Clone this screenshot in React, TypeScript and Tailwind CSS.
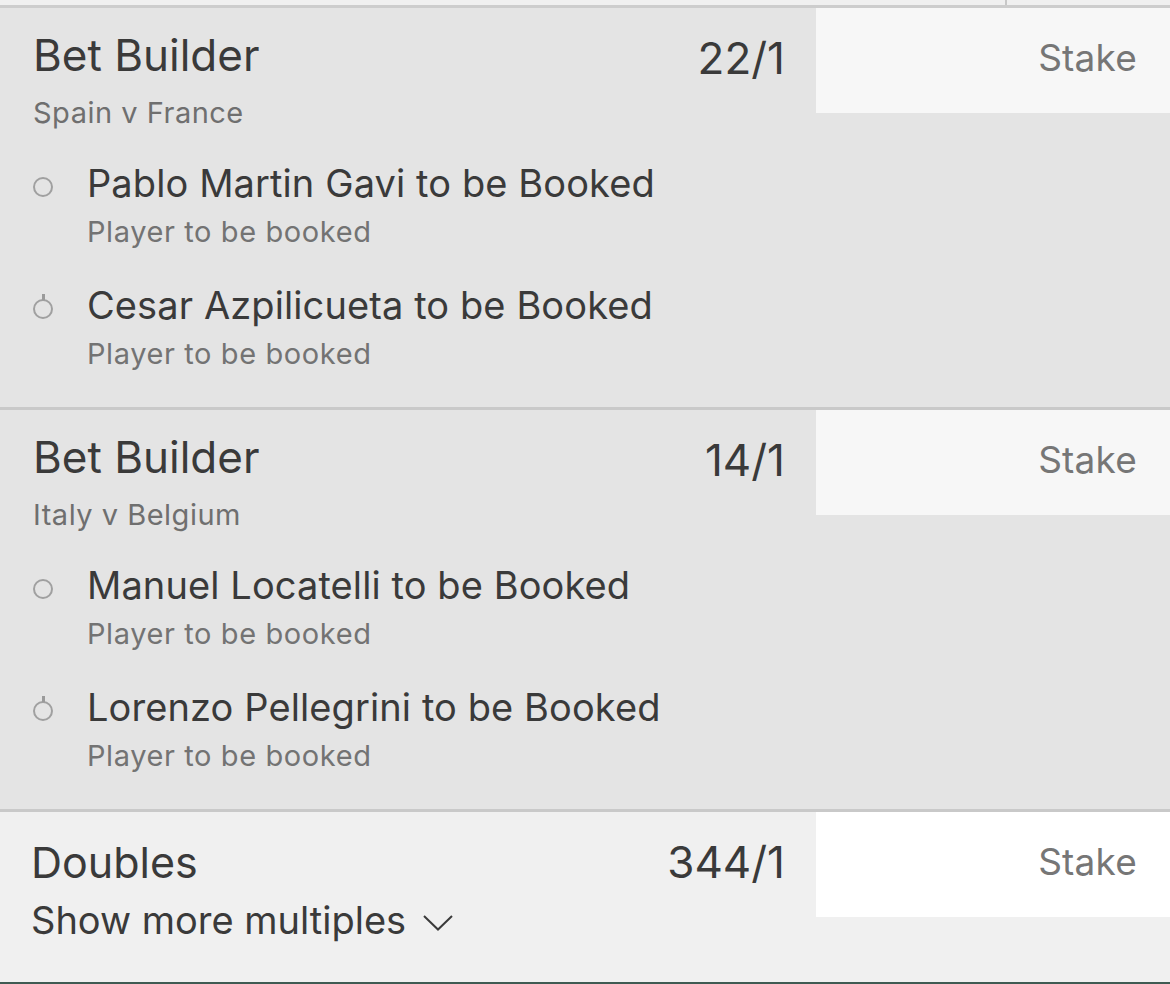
import React from "react";

type Leg = { name: string; market: string };
type Builder = { title: string; match: string; odds: string; legs: Leg[] };

const builders: Builder[] = [
  {
    title: "Bet Builder",
    match: "Spain v France",
    odds: "22/1",
    legs: [
      { name: "Pablo Martin Gavi to be Booked", market: "Player to be booked" },
      { name: "Cesar Azpilicueta to be Booked", market: "Player to be booked" },
    ],
  },
  {
    title: "Bet Builder",
    match: "Italy v Belgium",
    odds: "14/1",
    legs: [
      { name: "Manuel Locatelli to be Booked", market: "Player to be booked" },
      { name: "Lorenzo Pellegrini to be Booked", market: "Player to be booked" },
    ],
  },
];

// Ring marker for each leg; later legs get a short connector stub on top
function LegDot({ linked }: { linked: boolean }) {
  return (
    <div className="relative w-[20px] h-[20px]">
      {linked && <div className="absolute left-[9px] top-[-5px] w-[2.5px] h-[6px] bg-[#9a9a9a]" />}
      <div className="w-[20px] h-[20px] rounded-full border-[2.5px] border-[#a0a0a0]" />
    </div>
  );
}

function StakeBox({ white }: { white?: boolean }) {
  return (
    <div
      className={`h-[105px] flex justify-end pt-[28px] pr-[33px] text-[37px] leading-[44px] tracking-[0.2px] text-[#767676] ${
        white ? "bg-white" : "bg-[#f7f7f7]"
      }`}
    >
      Stake
    </div>
  );
}

function BuilderSection({ b }: { b: Builder }) {
  return (
    <div className="flex h-[399px] bg-[#e4e4e4]">
      <div className="flex-1 flex flex-col">
        <div className="flex justify-between items-start pl-[33px] pr-[31px] pt-[23px]">
          <div className="text-[44px] leading-[48px] text-[#3a3a3a]">{b.title}</div>
          <div className="text-[44px] leading-[48px] mt-[3px] text-[#3a3a3a]">{b.odds}</div>
        </div>
        <div className="pl-[33px] mt-[14px] text-[29px] leading-[34px] tracking-[0.5px] text-[#6f6f6f]">
          {b.match}
        </div>
        <div className="flex flex-col gap-[33px] pt-[30px]">
          {b.legs.map((leg, i) => (
            <div key={leg.name} className="flex pl-[33px]">
              <div className="w-[54px] pt-[17px]">
                <LegDot linked={i > 0} />
              </div>
              <div className="flex flex-col">
                <div className="text-[38px] leading-[46px] tracking-[0.1px] text-[#3a3a3a]">{leg.name}</div>
                <div className="mt-[9px] text-[29px] leading-[34px] tracking-[0.6px] text-[#737373]">
                  {leg.market}
                </div>
              </div>
            </div>
          ))}
        </div>
      </div>
      <div className="w-[354px]">
        <StakeBox />
      </div>
    </div>
  );
}

export default function App() {
  return (
    <div
      className="w-[1170px] h-[984px] bg-[#e4e4e4] flex flex-col overflow-hidden"
      style={{ fontFamily: "Inter, 'Noto Sans', sans-serif" }}
    >
      <div className="h-[5px] bg-[#f0f0f0] flex justify-end">
        <div className="w-[2px] bg-[#c8c8c8] mr-[163px]" />
      </div>
      <div className="h-[3px] bg-[#cdcdcd]" />
      {builders.map((b) => (
        <React.Fragment key={b.match}>
          <BuilderSection b={b} />
          <div className="h-[3px] bg-[#c9c9c9]" />
        </React.Fragment>
      ))}
      <div className="flex flex-1 bg-[#f0f0f0]">
        <div className="flex-1 flex flex-col pl-[31px] pr-[31px] pt-[26px]">
          <div className="flex justify-between items-start">
            <div className="text-[43px] leading-[48px] text-[#3a3a3a]">Doubles</div>
            <div className="text-[44px] leading-[48px] text-[#3a3a3a]">344/1</div>
          </div>
          <div className="mt-[12px] flex items-start text-[38px] leading-[44px] text-[#3a3a3a]">
            <span>Show more multiples</span>
            <svg width="30" height="16" viewBox="0 0 30 16" fill="none" className="ml-[17px] mt-[17px]">
              <path d="M1 1 L15 14.5 L29 1" stroke="#3a3a3a" strokeWidth="2" />
            </svg>
          </div>
        </div>
        <div className="w-[354px]">
          <StakeBox white />
        </div>
      </div>
      <div className="h-[2px] bg-[#3f5a52]" />
    </div>
  );
}
